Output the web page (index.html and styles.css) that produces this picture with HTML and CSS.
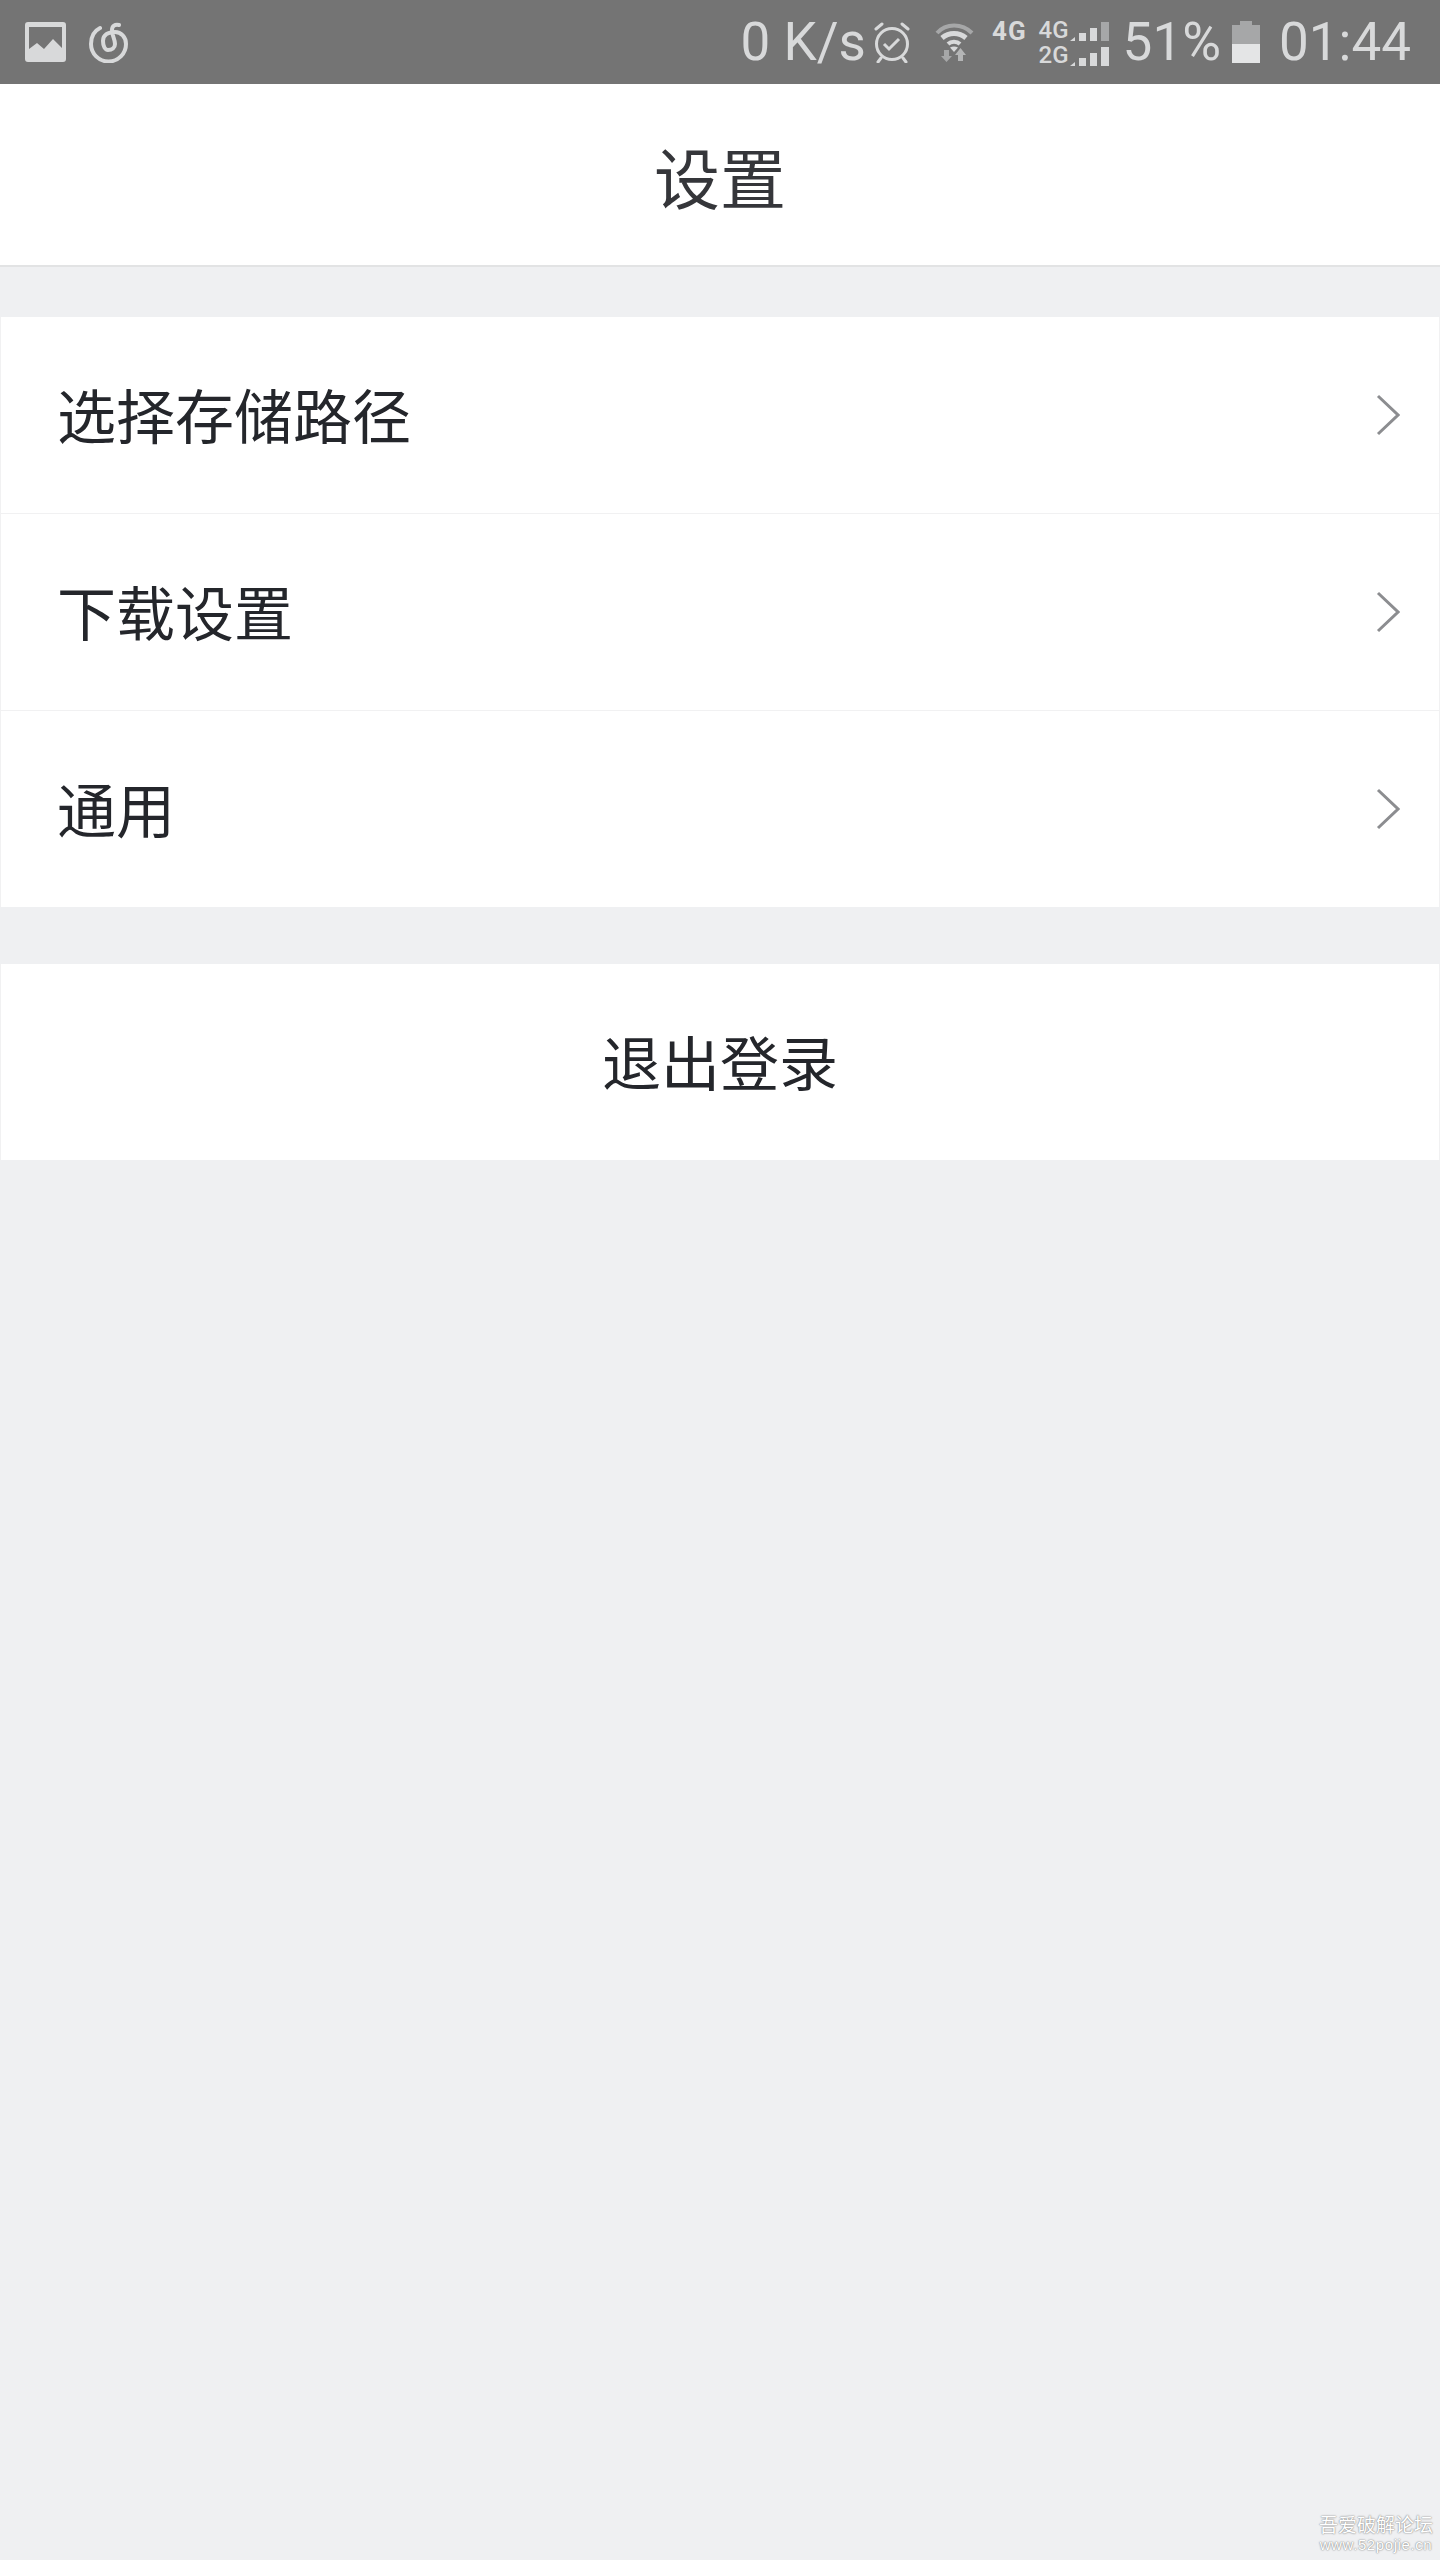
FILE: index.html
```html
<!DOCTYPE html>
<html lang="zh-CN">
<head>
  <meta charset="UTF-8" />
  <meta name="viewport" content="width=device-width, initial-scale=1.0"/>
  <title>设置</title>
  <link rel="stylesheet" href="styles.css">
</head>
<body>

  <!-- STATUS BAR -->
  <div class="status-bar">
    <div class="status-left">
      <svg class="icon-picture" viewBox="0 0 41 40">
        <path fill="#d8d9da" fill-rule="evenodd" d="M3 0h35a3 3 0 0 1 3 3v34a3 3 0 0 1-3 3H3a3 3 0 0 1-3-3V3a3 3 0 0 1 3-3zM4 5v22l8-6 7 6 9-10 9 9V5z"/>
      </svg>
      <svg class="icon-swirl" viewBox="0 0 39 42" fill="none" stroke="#d8d9da" stroke-width="4" stroke-linecap="round">
        <path d="M11 7C5 10 2 16 2 23a17.500 17.500 0 0 0 35 0c0-7-5-12-11-12-7 0-12 3-12 9 0 5 2 9 5 9 4 0 7-2 7-6 0-5-3-8-3-14 0-4 3-6 7-5"/>
      </svg>
    </div>
    <div class="status-right">
      <span class="status-speed">0 K/s</span>
      <svg class="icon-alarm" viewBox="0 0 38 42" fill="none" stroke="#d8d9da" stroke-width="3">
        <circle cx="19" cy="23" r="15.500"/>
        <path d="M11 23l5 5 10-10"/>
        <path d="M3 8l6-5M35 8l-6-5M8 37l-3 4M30 37l3 4" stroke-linecap="round"/>
      </svg>
      <svg class="icon-wifi" viewBox="0 0 40 40" fill="none">
        <path d="M3 11C12 1 28 1 38 11" stroke="#a6a7a8" stroke-width="4"/>
        <path d="M8 16c7-6 17-6 24 0" stroke="#d8d9da" stroke-width="5"/>
        <path d="M14 22c3-3 9-3 12 0" stroke="#d8d9da" stroke-width="4"/>
        <path d="M16 25.500q4-2 8 0l-4 4.500z" fill="#d8d9da"/>
        <path d="M10 28h5v6h3l-5.500 6L7 34h3z" fill="#a6a7a8"/>
        <path d="M26.500 26l5.500 7h-3v6h-5v-6h-3z" fill="#b4b5b6"/>
      </svg>
      <span class="net-label">4G</span>
      <div class="net-stack">
        <div class="net-row">
          <span class="net-small">4G</span>
          <svg class="icon-signal" viewBox="0 0 40 19">
            <path d="M0 19l5-4v4z" fill="#d8d9da"/>
            <rect x="9" y="11" width="7" height="8" fill="#d8d9da"/>
            <rect x="20" y="6" width="7" height="13" fill="#d8d9da"/>
            <rect x="31" y="0" width="8" height="19" fill="#a6a7a8"/>
          </svg>
        </div>
        <div class="net-row">
          <span class="net-small">2G</span>
          <svg class="icon-signal" viewBox="0 0 40 19">
            <path d="M0 19l5-4v4z" fill="#d8d9da"/>
            <rect x="9" y="11" width="7" height="8" fill="#d8d9da"/>
            <rect x="20" y="6" width="7" height="13" fill="#d8d9da"/>
            <rect x="31" y="0" width="8" height="19" fill="#d8d9da"/>
          </svg>
        </div>
      </div>
      <span class="status-percent">51%</span>
      <div class="battery">
        <div class="battery-cap"></div>
        <div class="battery-empty"></div>
        <div class="battery-fill"></div>
      </div>
      <span class="status-time">01:44</span>
    </div>
  </div>

  <!-- HEADER -->
  <div class="header">设置</div>

  <!-- SETTINGS LIST -->
  <div class="card list-card">
    <div class="row">
      <span>选择存储路径</span>
      <svg class="chevron" viewBox="0 0 24 44"><path d="M2 3l20 19L2 41"/></svg>
    </div>
    <div class="row">
      <span>下载设置</span>
      <svg class="chevron" viewBox="0 0 24 44"><path d="M2 3l20 19L2 41"/></svg>
    </div>
    <div class="row">
      <span>通用</span>
      <svg class="chevron" viewBox="0 0 24 44"><path d="M2 3l20 19L2 41"/></svg>
    </div>
  </div>

  <div class="card logout"><span>退出登录</span></div>

  <!-- WATERMARK -->
  <div class="watermark">
    <div class="watermark-title">吾爱破解论坛</div>
    <div class="watermark-url">www.52pojie.cn</div>
  </div>

</body>
</html>
```

FILE: styles.css
```css
body {
  margin: 0;
  height: 2560px;
  position: relative;
  overflow: hidden;
  background: #eff0f2;
  font-family: "Noto Sans CJK SC", "Noto Sans", sans-serif;
  color: #24262b;
}

.status-bar {
  height: 84px;
  background: #747474;
  color: #d8d9da;
  display: flex;
  justify-content: space-between;
  align-items: center;
  padding: 0 29px 0 25px;
  font-family: Roboto, sans-serif;
}

.status-left {
  display: flex;
  align-items: center;
  gap: 23px;
}

.status-right {
  display: flex;
  align-items: center;
  height: 84px;
}

.icon-picture {
  width: 41px;
  height: 40px;
}

.icon-swirl {
  width: 39px;
  height: 42px;
}

.status-speed,
.status-percent,
.status-time {
  font-size: 53px;
  line-height: 84px;
  font-weight: 400;
}

.status-speed {
  margin-right: 7px;
}

.icon-alarm {
  width: 38px;
  height: 42px;
  margin-right: 23px;
}

.icon-wifi {
  width: 40px;
  height: 40px;
  margin-right: 18px;
}

.net-label {
  font-size: 26px;
  line-height: 26px;
  font-weight: 700;
  letter-spacing: 1px;
  margin-bottom: 22px;
}

.net-small {
  font-size: 24px;
  line-height: 22px;
  font-weight: 500;
}

.net-stack {
  margin-left: 12px;
  margin-right: 13px;
  display: flex;
  flex-direction: column;
  gap: 3px;
}

.net-row {
  display: flex;
  align-items: flex-end;
  width: 71px;
  justify-content: space-between;
}

.icon-signal {
  width: 40px;
  height: 19px;
}

.battery {
  width: 28px;
  height: 42px;
  margin: 0 19px 0 11px;
  display: flex;
  flex-direction: column;
  align-items: center;
}

.battery-cap {
  width: 12px;
  height: 4px;
  background: #a6a7a8;
}

.battery-empty {
  width: 28px;
  height: 19px;
  background: #a6a7a8;
}

.battery-fill {
  width: 28px;
  height: 19px;
  background: #e4e5e6;
}

.header {
  height: 181px;
  background: #fff;
  border-bottom: 2px solid #e2e3e4;
  display: flex;
  align-items: center;
  justify-content: center;
  font-size: 66px;
  color: #35363a;
}

.card {
  background: #fff;
  border-left: 1px solid #f1f1f2;
  border-right: 1px solid #f1f1f2;
}

.list-card {
  margin-top: 50px;
}

.row {
  height: 196px;
  padding: 0 39px 0 56px;
  border-bottom: 1px solid #f1f1f2;
  display: flex;
  align-items: center;
  justify-content: space-between;
  font-size: 59px;
}

.row span,
.logout span {
  margin-bottom: 3px;
}

.row:last-child {
  border-bottom: none;
}

.chevron {
  width: 24px;
  height: 44px;
  fill: none;
  stroke: #8c8d90;
  stroke-width: 3;
}

.logout {
  margin-top: 57px;
  height: 196px;
  display: flex;
  align-items: center;
  justify-content: center;
  font-size: 59px;
}

.watermark {
  position: absolute;
  right: 7px;
  bottom: 6px;
  color: #fff;
  text-align: center;
  text-shadow: 0 0 2px #8a8a8a, 0 0 1px #8a8a8a;
}

.watermark-title {
  font-size: 19px;
  line-height: 24px;
}

.watermark-url {
  font-family: "Liberation Sans", sans-serif;
  font-size: 15px;
  line-height: 18px;
  letter-spacing: 0.6px;
}
```
